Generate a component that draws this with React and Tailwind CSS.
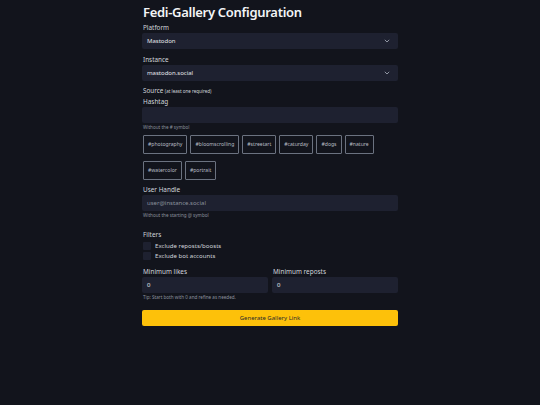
import React from "react";

const Chevron = () => (
  <svg width="6" height="4" viewBox="0 0 6 4" className="shrink-0">
    <path d="M0.8 0.8 L3 3 L5.2 0.8" fill="none" stroke="#9ca3af" strokeWidth="0.9" />
  </svg>
);

const Label = ({ children }) => (
  <div className="text-[6.4px] leading-[10px] text-[#d1d5db] pl-[1px]">{children}</div>
);

const Hint = ({ children }) => (
  <div className="text-[4.6px] leading-[7px] text-[#8b919c] pl-[1px] mt-[1px]">{children}</div>
);

const Select = ({ value }) => (
  <div className="h-[16px] rounded-[2px] bg-[#1e2130] flex items-center justify-between pl-[5px] pr-[8px] text-[6px] text-[#e5e7eb]">
    <span>{value}</span>
    <Chevron />
  </div>
);

const Input = ({ value, placeholder }) => (
  <div className="h-[16px] rounded-[2px] bg-[#1e2130] flex items-center pl-[5px] text-[6px]">
    {value ? <span className="text-[#e5e7eb]">{value}</span> : <span className="text-[#8b919c]">{placeholder}</span>}
  </div>
);

const tags1 = ["#photography", "#bloomscrolling", "#streetart", "#caturday", "#dogs", "#nature"];
const tags2 = ["#watercolor", "#portrait"];

const Tag = ({ t }) => (
  <div className="h-[19px] border border-[#6b7280] rounded-[1px] px-[4px] flex items-center text-[5.1px] text-[#b8bcc4]">
    {t}
  </div>
);

const Check = ({ label }) => (
  <div className="flex items-center gap-[4px] h-[10px]">
    <div className="w-[8px] h-[8px] rounded-[1px] bg-[#1e2130]" />
    <span className="text-[6.1px] text-[#d1d5db]">{label}</span>
  </div>
);

export default function App() {
  return (
    <div
      className="w-[540px] h-[405px] bg-[#12141c] overflow-hidden"
      style={{ fontFamily: '"Noto Sans", "Open Sans", sans-serif' }}
    >
      <div className="w-[256px] mx-auto">
        <h1 className="text-[13px] leading-[18px] font-semibold tracking-[-0.3px] text-[#f3f4f6] mt-[3px] pl-[1px]">
          Fedi-Gallery Configuration
        </h1>

        <div className="mt-[2px]">
          <Label>Platform</Label>
          <Select value="Mastodon" />
        </div>
        <div className="mt-[6px]">
          <Label>Instance</Label>
          <Select value="mastodon.social" />
        </div>

        <div className="mt-[5px] text-[6.3px] leading-[10px] text-[#d1d5db] pl-[1px]">
          Source <span className="text-[4.5px]">(at least one required)</span>
        </div>
        <div className="mt-[1px]">
          <Label>Hashtag</Label>
          <Input placeholder="" />
          <Hint>Without the # symbol</Hint>
        </div>

        <div className="mt-[4px] flex flex-col gap-[7px] pl-[1px]">
          <div className="flex gap-[3px]">
            {tags1.map((t) => (
              <Tag key={t} t={t} />
            ))}
          </div>
          <div className="flex gap-[3px]">
            {tags2.map((t) => (
              <Tag key={t} t={t} />
            ))}
          </div>
        </div>

        <div className="mt-[5px]">
          <Label>User Handle</Label>
          <Input placeholder="user@instance.social" />
          <Hint>Without the starting @ symbol</Hint>
        </div>

        <div className="mt-[11px]">
          <Label>Filters</Label>
          <div className="mt-[1px] pl-[1px]">
            <Check label="Exclude reposts/boosts" />
            <Check label="Exclude bot accounts" />
          </div>
        </div>

        <div className="mt-[6px] grid grid-cols-2 gap-x-[4px]">
          <div>
            <Label>Minimum likes</Label>
            <Input value="0" />
          </div>
          <div>
            <Label>Minimum reposts</Label>
            <Input value="0" />
          </div>
        </div>
        <Hint>Tip: Start both with 0 and refine as needed.</Hint>

        <div className="mt-[9px] h-[16px] rounded-[2px] bg-[#fdc10a] flex items-center justify-center text-[6px] text-[#2b2b2b]">
          Generate Gallery Link
        </div>
      </div>
    </div>
  );
}
